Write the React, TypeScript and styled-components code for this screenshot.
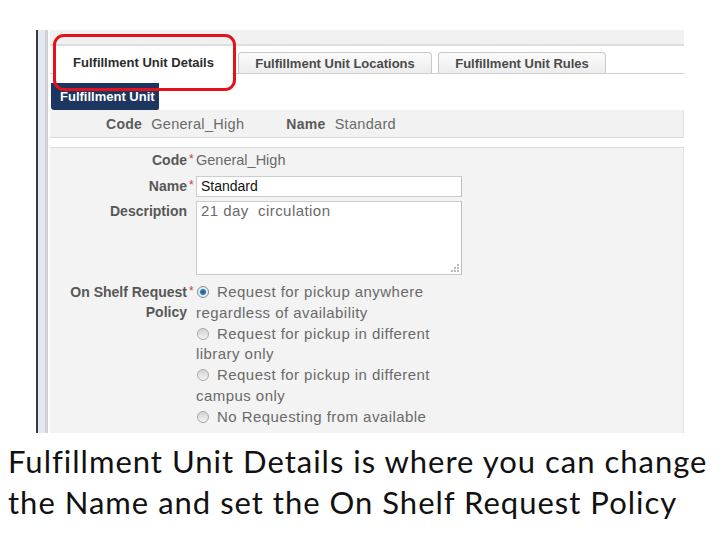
import React from "react";
import styled, { createGlobalStyle } from "styled-components";

const Global = createGlobalStyle`
  html, body { margin: 0; padding: 0; background: #ffffff; }
  body { width: 720px; height: 540px; overflow: hidden; font-family: "Liberation Sans", Arial, sans-serif; }
`;

const Page = styled.div`
  width: 720px;
  height: 540px;
  display: flex;
  flex-direction: column;
  background: #fff;
`;

const Shot = styled.div`
  margin: 30px 0 0 36px;
  width: 648px;
  height: 403px;
  flex-shrink: 0;
  display: flex;
  overflow: hidden;
  position: relative;
`;

const RailEdge = styled.div`
  width: 2px;
  background: #3a3a3a;
`;

const Rail = styled.div`
  width: 7px;
  background: #e4e9f1;
  border-right: 3px solid #cfd1d4;
`;

const Main = styled.div`
  flex: 1;
  margin-left: 2px;
  display: flex;
  flex-direction: column;
  position: relative;
  min-height: 0;
  & > * { flex-shrink: 0; }
`;

const TopBand = styled.div`
  height: 14px;
  background: #f1f1f1;
  border-bottom: 2px solid #dedede;
`;

const TabBar = styled.div`
  height: 27px;
  display: flex;
  align-items: flex-end;
  gap: 6px;
  padding-left: 5px;
  border-bottom: 1px solid #cfcfcf;
`;

const Tab = styled.div<{ $active?: boolean; $w: number }>`
  width: ${(p) => p.$w}px;
  height: ${(p) => (p.$active ? 27 : 21)}px;
  box-sizing: border-box;
  display: flex;
  align-items: center;
  justify-content: center;
  font-size: 13px;
  font-weight: bold;
  color: ${(p) => (p.$active ? "#2b2b2b" : "#4a4a4a")};
  background: ${(p) => (p.$active ? "#ffffff" : "linear-gradient(#fbfbfb, #ececec)")};
  border: 1px solid ${(p) => (p.$active ? "#ffffff" : "#c9c9c9")};
  border-bottom: none;
  border-radius: 4px 4px 0 0;
  padding-top: ${(p) => (p.$active ? 3 : 1)}px;
  margin-bottom: ${(p) => (p.$active ? -1 : 0)}px;
`;

const Highlight = styled.div`
  position: absolute;
  left: 3px;
  top: 4px;
  width: 183px;
  height: 57px;
  box-sizing: border-box;
  border: 3.5px solid #e3121b;
  border-radius: 11px;
  pointer-events: none;
`;

const Badge = styled.div`
  margin-top: 9px;
  margin-left: 1px;
  width: 108px;
  height: 27px;
  box-sizing: border-box;
  background: #1d365f;
  color: #ffffff;
  font-size: 13px;
  font-weight: bold;
  padding-left: 9px;
  display: flex;
  align-items: center;
  border-radius: 0 0 2px 3px;
`;

const Summary = styled.div`
  height: 27px;
  background: #f2f2f2;
  border-bottom: 1px solid #dadada;
  border-right: 1px solid #e2e2e2;
  display: flex;
  align-items: center;
  padding-left: 56px;
`;

const SumLabel = styled.span`
  font-size: 14px;
  font-weight: bold;
  letter-spacing: 0.3px;
  color: #5a5a5a;
  margin-right: 9px;
`;

const SumValue = styled.span`
  font-size: 14.5px;
  letter-spacing: 0.3px;
  color: #6a6a6a;
  margin-right: 42px;
`;

const Form = styled.div`
  margin-top: 9px;
  flex: 1 0 auto;
  background: #f3f3f3;
  border-top: 1px solid #dcdcdc;
  border-right: 1px solid #e2e2e2;
  padding-top: 2px;
  display: grid;
  grid-template-columns: 137px 9px 270px;
  grid-auto-rows: min-content;
  font-size: 14px;
  color: #666;
`;

const Label = styled.div<{ $mt?: number }>`
  text-align: right;
  font-weight: bold;
  color: #575757;
  line-height: 20px;
  margin-top: ${(p) => p.$mt ?? 0}px;
`;

const Star = styled.div<{ $mt?: number }>`
  color: #d23a3a;
  font-size: 12px;
  line-height: 18px;
  padding-left: 2px;
  margin-top: ${(p) => p.$mt ?? 0}px;
`;

const Value = styled.div<{ $mt?: number }>`
  font-size: 14.5px;
  line-height: 20px;
  color: #6a6a6a;
  margin-top: ${(p) => p.$mt ?? 0}px;
`;

const Input = styled.div`
  margin-top: 6px;
  width: 266px;
  height: 21px;
  box-sizing: border-box;
  background: #fff;
  border: 1px solid #c9cdd2;
  border-right-color: #b9bdc2;
  font-size: 14px;
  color: #111;
  padding-left: 4px;
  line-height: 19px;
`;

const TextArea = styled.div`
  margin-top: 4px;
  width: 266px;
  height: 74px;
  box-sizing: border-box;
  background: #fff;
  border: 1px solid #c9cdd2;
  border-right-color: #b9bdc2;
  font-size: 15px;
  letter-spacing: 0.45px;
  color: #6a6a6a;
  padding: 0 4px;
  line-height: 18px;
  position: relative;
  white-space: pre;
`;

const Grip = styled.svg`
  position: absolute;
  right: 1px;
  bottom: 1px;
`;

const Options = styled.div`
  margin-top: 7px;
  width: 244px;
  font-size: 15px;
  letter-spacing: 0.45px;
  line-height: 20.8px;
  color: #6a6a6a;
`;

const Option = styled.div``;

const Radio = styled.span<{ $on?: boolean }>`
  display: inline-block;
  width: 12px;
  height: 12px;
  box-sizing: border-box;
  border-radius: 50%;
  border: 1px solid ${(p) => (p.$on ? "#7c8a96" : "#a9a9a9")};
  background: ${(p) =>
    p.$on
      ? "radial-gradient(circle at 50% 50%, #1c5d92 0, #2f7fbd 2.6px, #dfe7ee 3.4px, #f4f4f4 5px)"
      : "linear-gradient(#d2d2d2, #f4f4f4)"};
  margin: 0 8px 0 1px;
  vertical-align: -1px;
`;

const Caption = styled.div`
  margin-top: 8px;
  padding-left: 8px;
  font-family: Lato, "Open Sans", sans-serif;
  font-size: 31px;
  letter-spacing: 1px;
  line-height: 41px;
  color: #111;
  white-space: nowrap;
`;

export default function App() {
  return (
    <Page>
      <Global />
      <Shot>
        <RailEdge />
        <Rail />
        <Main>
          <TopBand />
          <TabBar>
            <Tab $active $w={177}>Fulfillment Unit Details</Tab>
            <Tab $w={194}>Fulfillment Unit Locations</Tab>
            <Tab $w={168}>Fulfillment Unit Rules</Tab>
          </TabBar>
          <Highlight />
          <Badge>Fulfillment Unit</Badge>
          <Summary>
            <SumLabel>Code</SumLabel>
            <SumValue>General_High</SumValue>
            <SumLabel>Name</SumLabel>
            <SumValue>Standard</SumValue>
          </Summary>
          <Form>
            <Label>Code</Label>
            <Star>*</Star>
            <Value>General_High</Value>

            <Label $mt={6}>Name</Label>
            <Star $mt={6}>*</Star>
            <Input>Standard</Input>

            <Label $mt={4}>Description</Label>
            <div />
            <TextArea>
              {"21 day  circulation"}
              <Grip width="10" height="10" viewBox="0 0 10 10">
                <g fill="#b8b8b8">
                  <rect x="7" y="1" width="2" height="2" />
                  <rect x="4" y="4" width="2" height="2" />
                  <rect x="7" y="4" width="2" height="2" />
                  <rect x="1" y="7" width="2" height="2" />
                  <rect x="4" y="7" width="2" height="2" />
                  <rect x="7" y="7" width="2" height="2" />
                </g>
              </Grip>
            </TextArea>

            <Label $mt={7}>
              On Shelf Request
              <br />
              Policy
            </Label>
            <Star $mt={7}>*</Star>
            <Options>
              <Option>
                <Radio $on />
                Request for pickup anywhere regardless of availability
              </Option>
              <Option>
                <Radio />
                Request for pickup in different library only
              </Option>
              <Option>
                <Radio />
                Request for pickup in different campus only
              </Option>
              <Option>
                <Radio />
                No Requesting from available
              </Option>
            </Options>
          </Form>
        </Main>
      </Shot>
      <Caption>
        Fulfillment Unit Details is where you can change
        <br />
        the Name and set the On Shelf Request Policy
      </Caption>
    </Page>
  );
}
